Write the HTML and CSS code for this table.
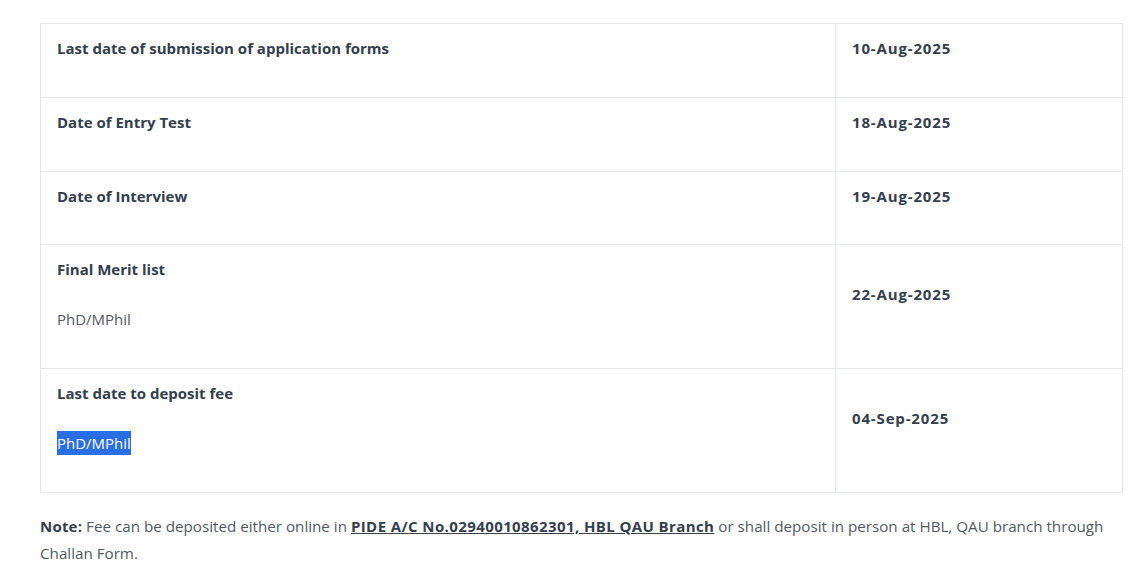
FILE: index.html
```html
<!DOCTYPE html>
<html>
<head>
<meta charset="utf-8">
<link rel="stylesheet" href="styles.css">
</head>
<body>
<div class="wrap">
  <table class="dates">
    <tbody>
      <tr>
        <td class="label"><p><strong>Last date of submission of application forms</strong></p></td>
        <td class="date"><p><strong>10-Aug-2025</strong></p></td>
      </tr>
      <tr>
        <td class="label"><p><strong>Date of Entry Test</strong></p></td>
        <td class="date"><p><strong>18-Aug-2025</strong></p></td>
      </tr>
      <tr>
        <td class="label"><p><strong>Date of Interview</strong></p></td>
        <td class="date"><p><strong>19-Aug-2025</strong></p></td>
      </tr>
      <tr>
        <td class="label"><p><strong>Final Merit list</strong></p><p>PhD/MPhil</p></td>
        <td class="date"><p><strong>22-Aug-2025</strong></p></td>
      </tr>
      <tr>
        <td class="label"><p><strong>Last date to deposit fee</strong></p><p><span class="sel">PhD/MPhil</span></p></td>
        <td class="date"><p><strong>04-Sep-2025</strong></p></td>
      </tr>
    </tbody>
  </table>
  <p class="note"><strong>Note:</strong> Fee can be deposited either online in <a href="#" class="acct">PIDE A/C No.02940010862301, HBL QAU Branch</a> or shall deposit in person at HBL, QAU branch through Challan Form.</p>
</div>
</body>
</html>
```
FILE: styles.css
```css
html, body {
  margin: 0;
  padding: 0;
  background: #ffffff;
}
body {
  font-family: "Open Sans", "Noto Sans", sans-serif;
  font-size: 15px;
  color: #4f5966;
}
.wrap {
  padding: 23px 16px 0 40px;
}
.dates {
  width: 1083px;
  border-collapse: collapse;
  border: 1px solid #e3e6ea;
}
.dates td {
  border: 1px solid #e3e6ea;
  padding: 10px 16px 12.8px;
  vertical-align: top;
}
.dates td.label {
  width: 762px;
}
.dates td.date {
  vertical-align: middle;
}
.dates td.date strong {
  letter-spacing: 0.85px;
}
.dates p {
  margin: 0 0 22px;
  line-height: 28px;
}
.dates strong {
  color: #333e4f;
  font-weight: 700;
}
.sel {
  background: #2a6ee6;
  color: #ffffff;
  padding: 2px 0;
}
.note {
  margin: 20px 0 0;
  font-size: 15.2px;
  line-height: 27px;
  width: 1075px;
}
.note strong,
.note a.acct {
  color: #333e4f;
  font-weight: 700;
  font-size: 15px;
}
.note strong {
  letter-spacing: 0.2px;
}
.note a.acct {
  text-decoration: underline;
  letter-spacing: 0.4px;
}
```
